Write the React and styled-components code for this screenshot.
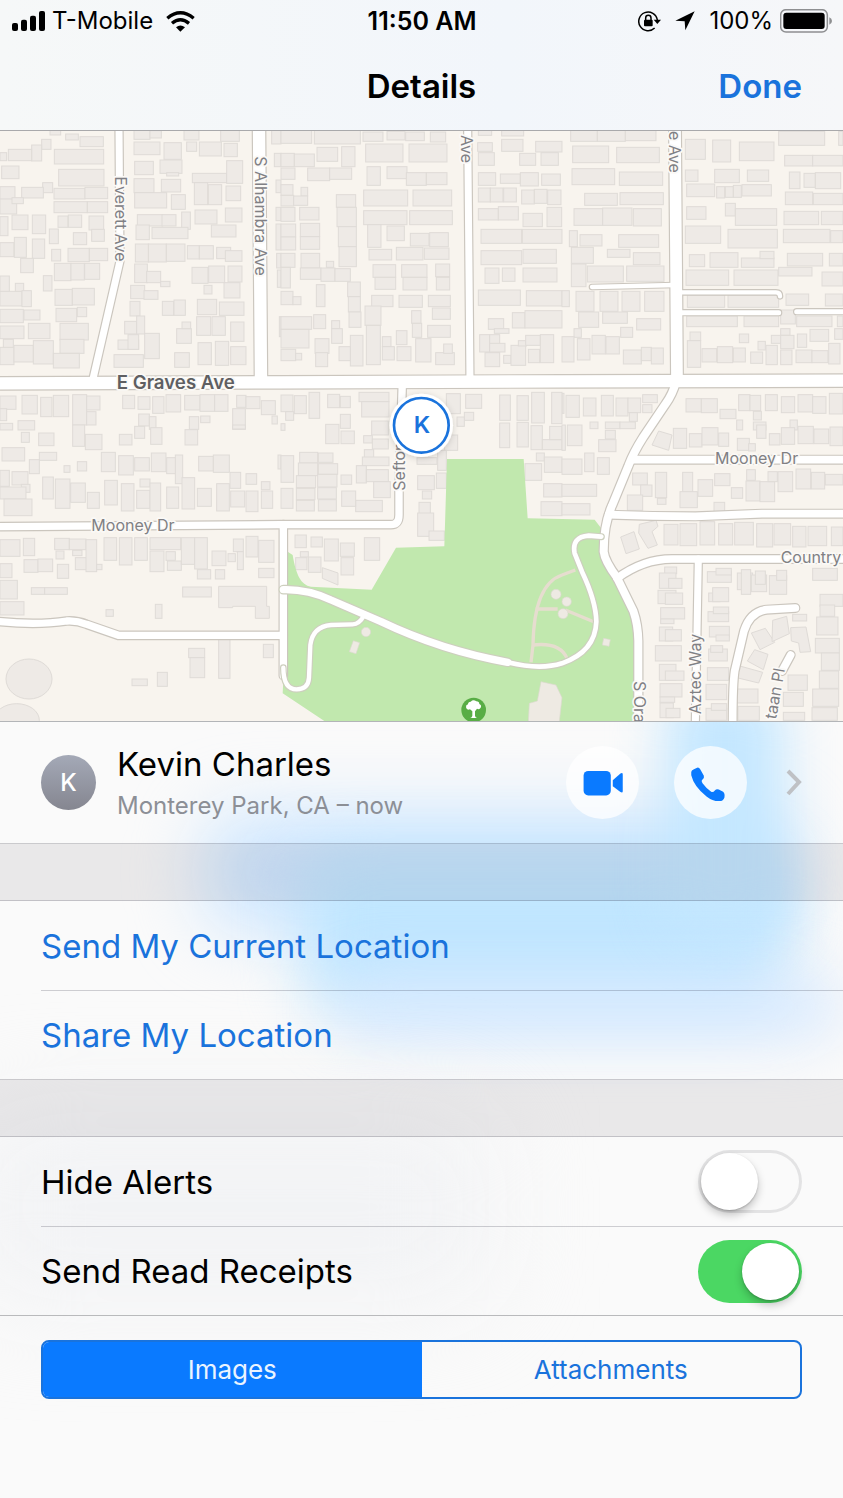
import React, { useState } from "react";
import styled, { createGlobalStyle } from "styled-components";

const GlobalStyle = createGlobalStyle`
  *, *::before, *::after { box-sizing: border-box; }
  body {
    margin: 0;
    background: #fafafa;
    color: #000;
    font-family: Inter, "Liberation Sans", sans-serif;
  }
  button { font-family: inherit; border: 0; padding: 0; cursor: pointer; }
`;

const BLUE = "#0a7aff";
const LINK = "#1a73dc";

/* ---------- top bars ---------- */

const Header = styled.header`
  background: linear-gradient(90deg, #f6f8f8, #f2f6fb 60%, #f6f7f9);
  border-bottom: 1px solid #a9a9ab;
`;

const StatusBar = styled.div`
  display: grid;
  grid-template-columns: 1fr auto 1fr;
  align-items: center;
  height: 42px;
  padding: 0 11px 0 12px;
  font-size: 24px;
  line-height: 28px;
`;

const StatusSide = styled.div`
  display: flex;
  align-items: center;
  justify-content: ${(p) => (p.$end ? "flex-end" : "flex-start")};
  gap: ${(p) => p.$gap}px;
`;

const Carrier = styled.span`
  margin-right: 6px;
`;

const Clock = styled.time`
  font-size: 25px;
  font-weight: 600;
`;

const NavBar = styled.div`
  display: grid;
  grid-template-columns: 1fr auto 1fr;
  align-items: center;
  height: 88px;
  padding: 0 41px;
`;

const Title = styled.h1`
  grid-column: 2;
  margin: 0;
  font-size: 33px;
  line-height: 40px;
  font-weight: 600;
`;

const DoneButton = styled.button`
  justify-self: end;
  background: none;
  color: ${LINK};
  font-size: 33px;
  line-height: 40px;
  font-weight: 600;
`;

/* ---------- map ---------- */

const MapFrame = styled.section`
  border-bottom: 1px solid #b3b5b8;
`;

const MapDrawing = styled.svg`
  display: block;
  width: 100%;
  height: auto;
  background: #f8f4ee;
`;

const Label = styled.text`
  font-family: Inter, "Liberation Sans", sans-serif;
  font-size: ${(p) => (p.$major ? 56 : 48)}px;
  font-weight: ${(p) => (p.$major ? 600 : 400)};
  fill: ${(p) => (p.$major ? "#5f5f62" : "#808084")};
  stroke: #fbf9f6;
  stroke-width: 10px;
  stroke-linejoin: round;
  paint-order: stroke;
`;

const PinLetter = styled.text`
  font-family: Inter, "Liberation Sans", sans-serif;
  font-size: 70px;
  font-weight: 600;
  fill: ${LINK};
  text-anchor: middle;
`;

/* Building footprints: x, y, width, height, one list for each block of the city. */
const blocks = [
  {
    x: 0,
    y: -3,
    list: [
      [150,0,32,15],[197,12,38,18],[240,20,70,30],[125,28,28,30],[95,45,30,48],[25,58,70,34],[0,68,20,24],[163,58,148,44],[5,108,52,38],[176,118,136,50],[128,158,30,30],[65,172,65,32],[0,170,45,38],[162,175,93,32],[255,172,68,34],[0,207,50,45],[36,203,34,18],[162,215,100,33],[262,215,61,33],[0,260,24,57],[36,255,48,44],[97,255,40,56],[174,258,30,34],[205,255,40,37],[267,258,44,42],[275,298,38,36],[148,297,27,44],[220,308,40,36],[0,338,42,42],[43,322,36,60],[97,327,37,58],[155,358,27,35],[204,355,64,40],[268,355,55,37],[62,385,38,43],[163,400,50,52],[213,400,40,50],[254,400,45,48],[130,437,26,46],[0,438,28,48],[46,460,25,25],[0,484,66,44],[66,482,28,48],[165,478,52,48],[217,475,66,50],[0,538,70,40],[72,540,48,30],[168,535,62,40],[232,532,28,28],[0,588,72,38],[85,580,65,46],[180,580,85,50],[10,628,30,28],[180,628,72,42],[0,652,42,52],[42,646,58,50],[100,632,60,70],[160,670,78,44],
      [402,0,48,28],[450,2,34,22],[402,36,78,38],[492,38,52,50],[552,0,45,30],[560,36,30,28],[598,36,66,42],[662,0,56,34],[672,40,40,40],[404,94,56,40],[480,90,66,40],[500,128,36,10],[402,146,60,42],[484,148,58,38],[404,188,96,46],[514,194,42,44],[577,130,103,28],[680,92,48,68],[583,158,40,66],[625,164,40,60],[678,168,44,44],[585,240,66,42],[676,234,50,42],[412,254,76,34],[486,254,42,34],[545,246,26,52],[408,285,40,44],[456,292,108,34],[634,285,74,36],[406,342,40,54],[445,342,54,54],[499,342,56,52],[562,347,36,40],[598,347,42,40],[650,352,42,34],[676,362,50,32],[404,402,38,56],[440,424,42,34],[482,454,28,16],[576,412,48,48],[626,408,48,50],[684,408,42,48],[392,466,42,40],[432,482,42,26],[612,466,24,26],[672,458,48,46],[390,514,30,44],[487,514,34,42],[522,510,34,46],[592,508,58,46],[658,516,74,40],[374,574,36,38],[410,558,24,54],[354,630,62,28],[384,614,32,44],[434,610,44,76],[342,674,88,38],[590,560,42,56],[636,560,40,56],[692,576,40,58],[530,596,44,44],[546,576,26,20],[594,638,40,66],[646,634,40,72],[692,650,46,54],[524,668,44,44],
      [815,0,28,42],[823,70,20,40],[828,150,15,38],[828,232,15,40],[828,282,15,78],[830,370,13,44],[832,420,11,52],[838,560,5,60],
      [0,798,48,40],[0,836,20,36],[66,796,46,56],[122,802,34,58],[160,796,46,64],[54,872,50,28],[0,880,38,20],[218,794,42,91],[260,798,40,42],[260,845,28,40],[368,796,36,40],[414,800,36,38],[458,800,34,50],[498,794,44,52],[554,796,46,44],[600,794,44,50],[644,794,40,50],[710,796,28,36],[738,800,42,36],[784,812,42,42],[416,852,32,36],[448,860,20,38],[568,860,28,38],[602,858,28,20],[698,836,38,62],[816,858,16,24],
    ],
  },
  {
    x: 843,
    y: -3,
    list: [
      [0,0,92,40],[100,0,138,42],[0,70,40,40],[40,72,60,38],[108,52,62,42],[182,50,40,60],[0,114,42,34],[80,114,66,38],[146,114,66,34],[0,164,36,32],[60,172,20,26],[0,196,38,32],[38,198,42,28],[0,232,42,42],[56,232,58,38],[0,282,44,39],[0,321,44,39],[58,280,58,40],[58,320,58,38],[166,194,58,38],[168,232,58,58],[172,290,54,60],[174,350,52,60],[0,370,42,42],[60,370,56,44],[136,394,22,18],[0,412,28,62],[58,414,62,34],[120,414,42,40],[162,416,46,38],[0,484,36,40],[36,500,24,24],[106,464,26,66],[200,456,38,44],[202,500,36,46],[204,546,36,46],[0,560,92,38],[0,598,84,56],[98,554,36,42],[152,572,24,24],[152,596,32,44],[102,626,42,44],[104,668,36,42],[208,616,38,92],[174,650,34,42],[0,658,44,34],[44,670,18,20],
      [246,6,60,28],[318,4,54,26],[374,6,56,26],[448,6,46,30],[254,42,112,54],[384,42,114,54],[258,110,40,56],[318,110,60,36],[376,128,60,38],[436,128,62,36],[248,180,132,48],[396,180,116,48],[248,242,130,42],[386,242,128,42],[260,284,40,68],[318,288,52,44],[388,310,56,38],[446,308,56,42],[264,358,68,32],[346,352,80,38],[430,354,74,34],[276,404,68,38],[362,404,76,38],[464,402,42,38],[282,442,62,36],[366,442,72,38],[466,442,40,38],[272,496,64,34],[354,496,70,36],[442,496,66,34],[454,534,54,34],[252,528,48,58],[256,586,42,118],[392,542,28,38],[394,580,28,42],[440,586,68,36],[304,620,26,30],[304,650,36,40],[346,602,32,42],[348,650,42,42],[404,626,46,70],[464,668,56,36],[488,642,26,28],
      [592,0,40,16],[662,0,66,18],[590,38,44,26],[662,28,64,36],[592,68,48,38],[716,70,48,36],[764,34,79,32],[780,68,52,38],[592,128,52,38],[658,132,60,28],[718,128,54,40],[782,132,56,34],[592,174,36,42],[628,174,38,42],[668,174,38,42],[722,180,38,42],[760,178,38,42],[800,180,40,44],[592,236,60,34],[652,230,60,40],[726,250,58,40],[798,232,44,58],[600,298,122,42],[724,298,119,42],[600,362,122,42],[726,358,100,42],[612,414,42,46],[664,414,38,40],[726,414,102,42],[592,480,126,46],[736,482,107,46],[622,566,46,32],[640,596,44,14],[694,548,38,46],[732,542,111,52],[596,614,30,52],[626,614,30,52],[626,640,46,26],[612,668,44,42],[668,676,22,24],[690,646,44,60],[712,632,24,16],[734,616,44,30],[742,658,34,40],[778,614,40,84],
    ],
  },
  {
    x: 1686,
    y: -3,
    list: [
      [26,0,80,34],[106,0,84,34],[190,0,92,32],[32,48,108,50],[164,52,128,46],[30,116,128,48],[172,126,130,40],[68,190,98,36],[174,188,130,36],[36,236,86,50],[122,234,88,52],[214,236,84,52],[22,302,24,48],[54,314,66,34],[170,314,120,38],[28,352,66,48],[136,358,68,24],[214,368,80,36],[28,402,44,68],[76,408,108,48],[194,408,112,46],[0,482,22,48],[42,484,54,60],[114,484,54,60],[180,484,54,60],[248,484,58,60],[50,546,60,46],[122,546,74,34],[224,566,72,34],[36,596,22,26],[176,592,36,30],[0,620,36,76],[46,626,38,64],[90,616,40,56],[132,620,40,52],[184,660,54,42],[238,652,30,40],[268,654,36,48],
      [370,28,60,60],[452,30,54,66],[532,36,104,56],[650,4,138,42],[830,4,13,42],[668,76,84,32],[752,76,91,32],[370,120,38,34],[458,118,74,40],[556,120,64,34],[682,126,32,50],[726,130,34,42],[760,128,76,48],[374,162,84,38],[464,170,24,34],[490,170,24,32],[514,166,24,36],[540,164,88,34],[670,186,82,38],[754,190,89,34],[374,230,58,38],[490,220,30,38],[520,236,124,50],[666,244,104,40],[778,244,65,40],[370,288,106,52],[498,298,148,56],[664,298,140,40],[806,302,37,36],[382,374,46,36],[444,368,84,44],[538,384,98,28],[594,364,42,22],[676,370,106,38],[802,370,41,38],[372,420,128,46],[516,420,132,46],[650,412,100,26],[780,426,63,42],[376,494,112,38],[498,494,152,38],[672,492,68,34],[790,492,53,36],[374,558,152,32],[546,558,104,32],[656,540,44,42],[704,558,106,32],[826,558,17,32],[384,606,32,26],[376,632,40,80],[532,612,28,26],[420,656,44,40],[466,650,46,48],[514,654,36,42],[566,666,36,34],[588,634,22,26],[612,646,34,58],[628,616,30,24],[656,596,28,20],[656,616,40,40],[656,660,34,44],[706,612,28,40],[744,598,56,36],[702,660,48,38],[750,662,48,36],[800,640,34,62],[818,596,25,32],
      [0,790,6,60],[12,796,40,66],[64,804,38,54],[118,796,36,62],[162,804,36,54],[198,804,38,44],[202,848,24,26],[242,794,44,24],[242,824,28,24],[372,806,46,40],[418,806,48,42],[474,838,48,28],[530,794,34,48],[564,796,32,46],[610,794,36,48],[658,800,40,48],[708,794,44,52],[752,800,40,50],[802,790,41,62],[574,844,24,26],[84,876,24,20],[130,876,44,20],[174,876,46,20],[524,870,18,30],[574,876,38,24],[684,870,22,30],
    ],
  },
  {
    x: 0,
    y: 882,
    list: [
      [64,22,24,30],[116,24,46,38],[218,0,36,64],[256,28,50,46],[358,28,38,32],[404,4,30,36],[452,8,34,50],[555,14,38,46],[698,0,38,12],[6,68,68,40],[118,82,52,24],[88,104,30,42],[192,122,18,20],[232,110,28,28],[304,82,42,58],[356,92,44,58],[404,98,44,40],[454,84,44,56],[500,98,28,48],[526,90,22,86],[596,94,44,44],[640,90,48,52],[0,136,28,48],[36,140,48,40],[64,178,26,24],[0,186,78,36],[12,222,84,50],[128,156,32,66],[166,162,44,88],[212,174,44,58],[262,202,36,48],[314,166,38,74],[364,176,38,82],[420,162,30,24],[410,196,40,54],[450,174,32,84],[500,186,36,64],[546,158,38,94],[592,190,42,54],[650,176,38,82],[690,142,32,48],[692,198,42,48],[738,146,32,32],[738,198,36,62],[784,170,26,24],[784,198,34,52],[834,90,9,42],
      [0,344,60,50],[70,340,34,52],[164,340,44,34],[208,342,50,32],[168,378,24,24],[218,376,28,16],[226,398,34,36],[258,344,32,96],[290,418,16,16],[312,338,38,68],[358,338,38,82],[404,338,38,68],[450,338,92,36],[450,378,42,62],[498,380,28,26],[502,408,42,28],[544,338,40,80],[584,338,38,94],[592,434,40,28],[636,378,42,44],[646,434,28,28],[684,386,22,24],[700,342,30,38],[712,380,18,54],[738,334,36,62],[776,346,46,66],[776,430,46,28],[72,404,42,38],[114,402,44,38],[172,418,34,42],[0,416,36,42],[0,466,52,56],[0,530,72,40],[94,488,40,20],[134,488,68,20],[548,486,86,30],[318,554,22,20],[466,538,20,42],[566,670,48,28],[570,698,44,60],[656,642,34,118],[790,658,30,40],[396,762,46,20],[472,742,30,42],
    ],
  },
  {
    x: 843,
    y: 762,
    list: [
      [0,30,36,50],[40,32,36,54],[84,22,32,78],[140,28,36,40],[178,34,30,34],[14,80,24,26],[0,116,12,20],[134,118,40,58],[178,88,30,42],[180,138,40,38],[234,22,90,28],[242,50,82,46],[272,108,50,42],[248,152,26,22],[274,162,48,30],[250,194,28,24],[244,216,80,26],[226,242,30,52],[256,254,66,36],[278,290,50,48],[224,346,80,34],[56,202,54,32],[112,204,44,28],[52,234,58,38],[112,236,58,32],[46,272,58,36],[110,268,58,38],[46,310,56,34],[110,308,56,34],[46,346,54,32],[112,344,54,34],[180,270,32,28],[182,318,42,46],[0,212,38,80],[0,310,36,60],
      [496,26,42,60],[554,28,48,42],[550,82,28,24],[528,96,22,28],[490,150,40,46],[408,218,60,20],[470,196,26,60],[410,272,50,42],[466,264,30,46],[424,318,28,24],[414,352,34,34],[410,384,48,70],[444,438,46,28],[656,30,32,76],[708,32,34,74],[752,22,38,92],[812,22,31,94],[656,114,30,74],[708,112,34,74],[750,122,34,72],[784,164,59,30],[806,124,37,40],[732,236,50,50],[766,204,24,24],[790,216,53,46],[788,296,55,40],[780,350,63,42],
      [42,450,34,38],[90,456,34,30],[130,462,42,66],[178,474,42,40],[180,518,38,52],[58,500,24,16],[44,518,34,36],[82,516,38,46],[250,458,46,68],
    ],
  },
  {
    x: 1686,
    y: 882,
    list: [
      [0,0,10,76],[16,0,44,62],[130,16,30,26],[110,44,52,36],[0,102,60,46],[68,84,28,56],[106,98,36,50],[0,178,104,36],[0,236,84,34],
      [334,10,40,60],[382,26,38,40],[420,8,48,52],[470,24,30,40],[526,40,36,36],[560,56,20,22],[584,0,28,40],[622,26,32,34],[658,8,40,50],[708,4,46,52],[756,12,44,44],[804,6,39,56],
      [212,144,44,36],[236,180,34,34],[280,142,34,76],[286,220,26,18],[196,210,46,46],[362,142,30,60],[354,200,52,48],[408,164,44,50],[458,146,46,36],[508,188,34,32],[554,134,26,32],[552,168,42,60],[594,170,44,60],[618,140,28,30],[648,140,44,60],[702,132,44,60],[748,142,40,50],[790,148,53,32],[456,232,32,32],
      [306,298,42,62],[354,296,50,66],[414,290,44,70],[470,296,42,64],[518,292,56,68],[584,296,48,70],[636,296,50,64],[692,304,40,62],[738,304,56,58],[808,306,35,56],
      [308,426,36,20],[292,444,50,46],[320,460,40,30],[288,496,54,40],[310,504,52,34],[296,548,72,34],[296,582,40,14],[292,606,40,42],[310,614,48,34],[280,662,78,46],[292,718,50,48],[310,738,56,28],[294,776,66,40],[294,816,44,16],[294,834,40,44],[312,850,42,28],
      [436,440,72,32],[462,430,46,20],[440,504,34,26],[452,488,48,42],[438,560,62,30],[454,546,46,20],[442,604,60,32],[462,630,40,18],[440,672,56,36],[446,662,36,20],[436,728,64,38],[432,778,62,46],[432,850,62,36],[448,836,46,20],
      [526,444,46,50],[538,434,28,74],[568,450,46,50],[580,438,30,40],[622,452,52,56],[644,436,30,30],[752,430,74,36],[774,508,69,36],[774,540,44,34],[764,576,64,54],[760,640,72,44],[778,684,54,52],[772,738,58,52],[752,792,78,52],[750,848,76,38],[692,568,42,20],
      [512,792,76,42],[528,844,64,42],[678,750,58,46],[664,802,60,42],[664,862,64,24],
    ],
  },
];

/* Footprints that do not sit square to the grid. */
const oddBuildings = [
  "M656 1366H800V1426H808V1462H766V1426H698V1430H656Z",
  "M1976 900L2016 912L2006 958L1956 942Z",
  "M1862 1218L1902 1202L1918 1254L1878 1268Z",
  "M1918 1180L1968 1168L1974 1186L1956 1202L1972 1242L1944 1252L1916 1206Z",
  "M967 1310L1014 1326V1362L967 1342Z",
  "M2254 1506L2296 1492L2324 1534L2280 1556Z",
  "M2264 1556L2304 1570L2290 1616L2242 1590Z",
  "M2216 1604L2288 1624L2276 1656L2210 1640Z",
  "M2318 1468L2360 1456L2368 1508L2316 1532Z",
  "M2372 1490L2418 1488L2432 1562L2400 1564L2396 1536L2374 1530Z",
];

/* Streets: path, full width. */
const streets = [
  ["M357 -10L360 390L277 752", 28],
  ["M777 -10L783 752", 44],
  ["M1403 -10L1410 750", 28],
  ["M2025 -10L2031 750", 42],
  ["M1776 468L2025 462", 20],
  ["M2035 484H2328Q2340 484 2340 496", 20],
  ["M2035 545H2336M2390 542H2540", 22],
  ["M-10 1187L843 1181H1173Q1197 1181 1197 1152V1080L1207 755", 29],
  ["M850 1181V1634", 29],
  ["M-10 1471Q110 1484 200 1470Q230 1468 260 1480L355 1513H850", 29],
  ["M2028 752Q2018 790 1996 820L1930 918Q1900 965 1885 1005L1836 1124Q1811 1180 1811 1262Q1814 1290 1851 1340L1900 1440Q1914 1480 1915 1530V1780", 31],
  ["M1896 986H2540", 30],
  ["M1826 1151Q1960 1156 2086 1156L2286 1148H2540", 30],
  ["M1851 1342Q1930 1284 2016 1284H2540", 30],
  ["M2095 1284L2086 1780", 28],
  ["M2386 1431L2300 1436Q2250 1442 2232 1500L2204 1620Q2198 1660 2198 1780", 30],
  ["M2372 1572L2346 1620", 30],
  ["M-10 757L843 754L1686 751L2540 749", 44],
];

const parkDrive = [
  ["M850 1610Q850 1675 890 1675Q925 1675 927 1640L931 1542Q938 1487 993 1482L1058 1480Q1078 1480 1093 1452", 20],
  ["M850 1376Q923 1374 993 1407L1143 1472Q1323 1558 1523 1594", 29],
  ["M1523 1594Q1620 1618 1686 1597Q1786 1562 1789 1472Q1788 1410 1746 1322L1724 1267Q1714 1218 1766 1214L1804 1217", 21],
];

function Roads({ items, edge }) {
  return (
    <g fill="none" strokeLinecap="round" strokeLinejoin="round">
      <g stroke={edge}>
        {items.map(([d, w]) => (
          <path key={d} d={d} strokeWidth={w} />
        ))}
      </g>
      <g stroke="#fff">
        {items.map(([d, w]) => (
          <path key={d} d={d} strokeWidth={w - 7} />
        ))}
      </g>
    </g>
  );
}

function LocationMap() {
  return (
    <MapFrame aria-label="Map">
      <MapDrawing viewBox="0 0 2529 1770" role="img" aria-label="Kevin Charles on the map">
        <defs>
          <filter id="pinShadow" x="-30%" y="-30%" width="160%" height="160%">
            <feDropShadow dx="0" dy="4" stdDeviation="10" floodColor="#000" floodOpacity="0.16" />
          </filter>
        </defs>
        <g fill="#eeeae6" stroke="#dfdbd7" strokeWidth="3">
          {blocks.map((b) => (
            <g key={`${b.x}-${b.y}`} transform={`translate(${b.x} ${b.y})`}>
              {b.list.map(([x, y, w, h]) => (
                <rect key={`${x}-${y}-${w}`} x={x} y={y} width={w} height={h} />
              ))}
            </g>
          ))}
          {oddBuildings.map((d) => (
            <path key={d} d={d} />
          ))}
          <ellipse cx="87" cy="1644" rx="69" ry="60" />
          <ellipse cx="50" cy="1768" rx="68" ry="50" />
        </g>

        <path
          fill="#c1e8ae"
          d="M1341 984H1571L1583 1162L1686 1164L1784 1166L1810 1200L1815 1280L1851 1340L1901 1460L1912 1530L1914 1770H973L848 1687L863 1390V1262L878 1272C888 1332 903 1362 933 1367L1115 1376L1188 1250L1333 1246Z"
        />
        <g fill="none" stroke="#e6ddcf" strokeWidth="10">
          <path d="M1593 1594L1599 1542Q1602 1360 1686 1332L1726 1317" />
          <path d="M1607 1434H1673M1696 1437L1781 1472" />
          <path d="M1599 1542Q1680 1533 1701 1582" />
        </g>
        <g fill="#eeeae3" stroke="#ddd9cf" strokeWidth="2">
          <circle cx="1668" cy="1390" r="15" />
          <circle cx="1689" cy="1448" r="15" />
          <circle cx="1700" cy="1412" r="14" />
          <circle cx="1098" cy="1503" r="14" />
          <path d="M1060 1529L1079 1535L1068 1568L1048 1562Z" />
          <path d="M1811 1522L1831 1526L1827 1546L1807 1542Z" />
          <path d="M1623 1652L1668 1662L1686 1700L1678 1772H1585L1588 1717L1612 1710Z" />
        </g>

        <Roads items={streets} edge="#cbc6be" />
        <Roads items={parkDrive} edge="#cdcfbe" />

        <circle cx="1421" cy="1737" r="37" fill="#58ad45" />
        <path
          fill="#fff"
          d="M1417 1741L1410 1735Q1400 1739 1398 1729Q1397 1722 1404 1720Q1404 1712 1412 1712Q1420 1704 1429 1711Q1438 1711 1438 1719Q1446 1723 1442 1730Q1438 1737 1431 1733L1425 1741V1754Q1426 1759 1431 1761H1411Q1416 1759 1417 1754Z"
        />

        <Label transform="translate(345 136) rotate(90)">Everett Ave</Label>
        <Label transform="translate(764 76) rotate(90)">S Alhambra Ave</Label>
        <Label transform="translate(1384 12) rotate(90)">Ave</Label>
        <Label transform="translate(2007 0) rotate(90)">e Ave</Label>
        <Label $major x="350" y="773">E Graves Ave</Label>
        <Label x="274" y="1201">Mooney Dr</Label>
        <Label x="2145" y="1000">Mooney Dr</Label>
        <Label x="2342" y="1297">Country</Label>
        <Label transform="translate(1215 1079) rotate(-90)">Sefton</Label>
        <Label transform="translate(1902 1650) rotate(90)">S Ora</Label>
        <Label transform="translate(2103 1750) rotate(-90)">Aztec Way</Label>
        <Label transform="translate(2328 1766) rotate(-80)">taan Pl</Label>

        <circle cx="1264" cy="883" r="95" fill="#fff" filter="url(#pinShadow)" />
        <circle cx="1264" cy="883" r="82" fill="#fff" stroke={LINK} strokeWidth="8" />
        <PinLetter x="1266" y="906">K</PinLetter>
      </MapDrawing>
    </MapFrame>
  );
}

/* ---------- details panel ---------- */

const Panel = styled.div`
  position: relative;
  isolation: isolate;
  overflow: hidden;
`;

/* Soft colour that shows through the translucent panel. */
const Glow = styled.div`
  position: absolute;
  z-index: -1;
  left: ${(p) => p.$left}%;
  width: ${(p) => p.$width}%;
  top: ${(p) => p.$top}px;
  height: ${(p) => p.$height}px;
  border-radius: 40px;
  background: ${(p) => p.$color};
  filter: blur(${(p) => p.$blur}px);
`;

const ContactRow = styled.div`
  display: flex;
  align-items: center;
  height: 121px;
  padding: 0 41px;
`;

const Avatar = styled.div`
  display: grid;
  place-items: center;
  flex: none;
  width: 55px;
  height: 55px;
  margin-right: 21px;
  border-radius: 50%;
  background: linear-gradient(#a4a9b7, #858690);
  color: #fff;
  font-size: 24px;
  line-height: 28px;
  font-weight: 500;
`;

const Person = styled.div`
  flex: 1;
  min-width: 0;
  padding-top: 2px;
`;

const PersonName = styled.h2`
  margin: 0;
  font-size: 33px;
  line-height: 44px;
  font-weight: 400;
`;

const PersonPlace = styled.p`
  margin: 0;
  color: #8c8f96;
  font-size: 24px;
  line-height: 40px;
`;

const Actions = styled.div`
  display: flex;
  align-items: center;
  gap: 35px;
  margin-right: 39px;
`;

const RoundButton = styled.button`
  display: block;
  width: 73px;
  height: 73px;
  border-radius: 50%;
  background: rgba(255, 255, 255, 0.75);

  svg { display: block; width: 73px; height: 73px; }
`;

const MoreButton = styled.button`
  display: block;
  background: none;

  svg { display: block; }
`;

const Band = styled.div`
  height: 58px;
  background: rgba(20, 0, 20, 0.07);
  border-top: 1px solid rgba(0, 0, 20, 0.13);
  border-bottom: 1px solid rgba(0, 0, 20, 0.16);
`;

const List = styled.ul`
  margin: 0;
  padding: 0 0 0 41px;
  list-style: none;
`;

const Row = styled.li`
  display: flex;
  align-items: center;
  justify-content: space-between;
  height: 90px;
  padding-right: 41px;
  border-bottom: 1px solid rgba(0, 0, 20, 0.18);
  font-size: 33px;
  line-height: 40px;

  &:last-child {
    height: 88px;
    border-bottom: 0;
  }
`;

const RowAction = styled.button`
  background: none;
  color: ${LINK};
  font-size: 33px;
  line-height: 40px;
`;

const Switch = styled.input`
  appearance: none;
  flex: none;
  width: 104px;
  height: 63px;
  margin: 0;
  padding: 3px;
  border-radius: 32px;
  background: transparent;
  box-shadow: inset 0 0 0 3px #e3e3e4;
  cursor: pointer;

  &::before {
    content: "";
    display: block;
    width: 57px;
    height: 57px;
    border-radius: 50%;
    background: #fff;
    box-shadow: 0 5px 8px rgba(0, 0, 0, 0.22), 0 1px 2px rgba(0, 0, 0, 0.2);
  }

  &:checked {
    background: #4bd763;
    box-shadow: none;
  }

  &:checked::before { margin-left: 41px; }
`;

const Footer = styled.div`
  padding: 24px 41px 99px;
  border-top: 1px solid #b9babc;
`;

const Segments = styled.div`
  display: grid;
  grid-template-columns: 1fr 1fr;
  height: 59px;
  border: 2px solid ${LINK};
  border-radius: 8px;
  overflow: hidden;
`;

const Segment = styled.button`
  background: ${(p) => (p.$active ? BLUE : "transparent")};
  color: ${(p) => (p.$active ? "#eaf4ff" : LINK)};
  font-size: 26px;
  line-height: 32px;
`;

/* ---------- icons ---------- */

const SignalIcon = () => (
  <svg width="33" height="20" viewBox="0 0 99 60" aria-hidden="true">
    <rect x="0" y="36" width="18" height="24" rx="6" />
    <rect x="27" y="26" width="18" height="34" rx="6" />
    <rect x="54" y="14" width="18" height="46" rx="6" />
    <rect x="81" y="0" width="18" height="60" rx="6" />
  </svg>
);

const WifiIcon = () => (
  <svg width="29" height="21" viewBox="0 0 87 63" aria-hidden="true">
    <g fill="none" stroke="#000" strokeWidth="10">
      <path d="M4 22Q43 -11 83 22" />
      <path d="M18 37Q43 16 69 37" />
    </g>
    <path d="M30 49Q43 38 57 49L43 62Z" />
  </svg>
);

const LockIcon = () => (
  <svg width="23" height="22" viewBox="0 0 69 66" aria-hidden="true">
    <path d="M50 54A28 28 0 1 1 58 30" fill="none" stroke="#000" strokeWidth="4.5" />
    <path d="M47 29H69L58 42Z" />
    <rect x="18" y="29" width="26" height="20" rx="3" />
    <path d="M23 31V24Q23 16 31 16Q39 16 39 24V31" fill="none" stroke="#000" strokeWidth="4.5" />
  </svg>
);

const ArrowIcon = () => (
  <svg width="20" height="20" viewBox="0 0 60 60" aria-hidden="true">
    <path d="M59 1L31 58L29 31L1 29Z" />
  </svg>
);

const BatteryIcon = () => (
  <svg width="52" height="24" viewBox="0 0 156 72" aria-hidden="true">
    <rect x="2" y="2" width="140" height="67" rx="16" fill="none" stroke="#8e8f91" strokeWidth="4.5" />
    <rect x="10" y="11" width="124" height="49" rx="9" />
    <path d="M148 25Q156 29 156 36Q156 43 148 47Z" fill="#8e8f91" />
  </svg>
);

const VideoIcon = () => (
  <svg viewBox="0 0 220 220" fill={BLUE} aria-hidden="true">
    <rect x="53" y="75" width="82" height="74" rx="14" />
    <path d="M141 103L164 83Q171 79 171 86V136Q171 143 164 139L141 121Z" />
  </svg>
);

const PhoneIcon = () => (
  <svg viewBox="0 0 220 220" fill={BLUE} aria-hidden="true">
    <path d="M52 78Q52 73 60 70L68 66Q75 63 79 70L90 90Q92 97 86 101Q81 105 86 112Q97 127 112 138Q118 141 123 134Q128 128 135 131L148 138Q154 143 152 155Q149 166 137 166Q117 167 98 152Q60 122 52 88Z" />
  </svg>
);

const ChevronIcon = () => (
  <svg width="16" height="27" viewBox="0 0 16 27" fill="none" aria-hidden="true">
    <path d="M2 2L13 13L2 25" stroke="#bfc1c5" strokeWidth="4" />
  </svg>
);

export default function App() {
  const [hideAlerts, setHideAlerts] = useState(false);
  const [receipts, setReceipts] = useState(true);
  const [tab, setTab] = useState("Images");

  return (
    <>
      <GlobalStyle />
      <Header>
        <StatusBar>
          <StatusSide $gap={7}>
            <SignalIcon />
            <Carrier>T-Mobile</Carrier>
            <WifiIcon />
          </StatusSide>
          <Clock>11:50 AM</Clock>
          <StatusSide $end $gap={14}>
            <LockIcon />
            <ArrowIcon />
            <StatusSide $gap={7}>
              <span>100%</span>
              <BatteryIcon />
            </StatusSide>
          </StatusSide>
        </StatusBar>
        <NavBar>
          <Title>Details</Title>
          <DoneButton type="button">Done</DoneButton>
        </NavBar>
      </Header>

      <LocationMap />

      <Panel as="main">
        <Glow $left={24} $width={70} $top={90} $height={120} $color="#cfe7ff" $blur={34} />
        <Glow $left={36} $width={57} $top={130} $height={160} $color="#c0e6ff" $blur={30} />
        <Glow $left={79} $width={14} $top={-40} $height={260} $color="#c4e7ff" $blur={26} />
        <Glow $left={40} $width={60} $top={250} $height={70} $color="rgba(214, 233, 255, 0.8)" $blur={28} />
        <Glow $left={-4} $width={62} $top={390} $height={190} $color="#f2f3f5" $blur={50} />

        <ContactRow>
          <Avatar aria-hidden="true">K</Avatar>
          <Person>
            <PersonName>Kevin Charles</PersonName>
            <PersonPlace>Monterey Park, CA – now</PersonPlace>
          </Person>
          <Actions>
            <RoundButton type="button" aria-label="Video call">
              <VideoIcon />
            </RoundButton>
            <RoundButton type="button" aria-label="Call">
              <PhoneIcon />
            </RoundButton>
          </Actions>
          <MoreButton type="button" aria-label="Contact details">
            <ChevronIcon />
          </MoreButton>
        </ContactRow>

        <Band />
        <List>
          <Row>
            <RowAction type="button">Send My Current Location</RowAction>
          </Row>
          <Row>
            <RowAction type="button">Share My Location</RowAction>
          </Row>
        </List>

        <Band />
        <List>
          <Row>
            <label htmlFor="hide-alerts">Hide Alerts</label>
            <Switch
              id="hide-alerts"
              type="checkbox"
              checked={hideAlerts}
              onChange={(e) => setHideAlerts(e.target.checked)}
            />
          </Row>
          <Row>
            <label htmlFor="read-receipts">Send Read Receipts</label>
            <Switch
              id="read-receipts"
              type="checkbox"
              checked={receipts}
              onChange={(e) => setReceipts(e.target.checked)}
            />
          </Row>
        </List>

        <Footer>
          <Segments role="group" aria-label="Shared items">
            {["Images", "Attachments"].map((name) => (
              <Segment
                key={name}
                type="button"
                $active={tab === name}
                aria-pressed={tab === name}
                onClick={() => setTab(name)}
              >
                {name}
              </Segment>
            ))}
          </Segments>
        </Footer>
      </Panel>
    </>
  );
}
